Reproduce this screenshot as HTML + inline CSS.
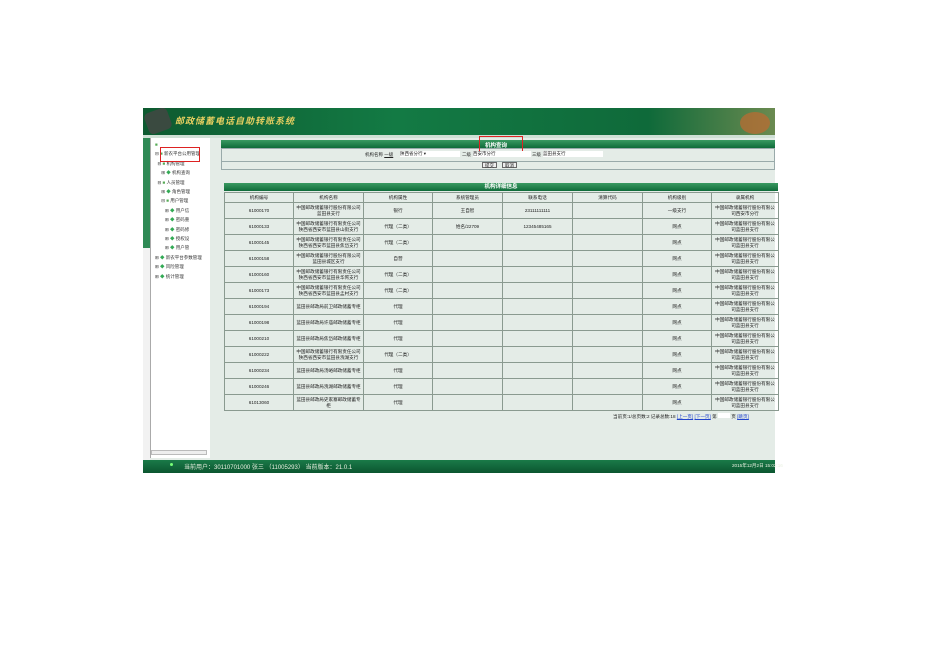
<!DOCTYPE html>
<html><head><meta charset="utf-8"><style>
*{margin:0;padding:0;box-sizing:border-box}
body{width:950px;height:671px;background:#fff;position:relative;overflow:hidden;font-family:"Liberation Sans","Noto Sans CJK SC",sans-serif;font-size:5px;color:#222}
.a{position:absolute}
table{border-collapse:collapse;table-layout:fixed}
td{border:1px solid #8a9a90;text-align:center;line-height:6px;font-size:4.6px;overflow:hidden;padding:0 1px}
.bar{background:linear-gradient(#3a9a62,#0f6b3a);height:8px;color:#fff;font-size:5.5px;font-weight:bold;text-align:center;line-height:8px}
</style></head><body>
<div class="a" style="left:143px;top:108px;width:632px;height:365px;background:#e4ece7"></div>
<!-- header -->
<div class="a" style="left:143px;top:108px;width:632px;height:27px;background:linear-gradient(90deg,#0d5a30,#137a44 40%,#0f6a3a 80%,#6a8a50)"></div>
<div class="a" style="left:146px;top:110px;width:24px;height:22px;background:#3a4a40;border-radius:5px;transform:rotate(-20deg)"></div>
<div class="a" style="left:175px;top:114px;color:#e8d060;font-size:9px;font-weight:bold;font-style:italic;letter-spacing:1px">邮政储蓄电话自助转账系统</div>
<div class="a" style="left:740px;top:112px;width:30px;height:22px;border-radius:50%;background:#c06a30;opacity:.7"></div>
<div class="a" style="left:143px;top:135px;width:632px;height:3px;background:#cfe0d5"></div>
<!-- left tabs -->
<div class="a" style="left:143px;top:138px;width:7px;height:322px;background:#f2f2f2"></div>
<div class="a" style="left:143px;top:138px;width:7px;height:110px;background:#2f8a55"></div>
<!-- tree -->
<div class="a" style="left:150px;top:138px;width:60px;height:320px;background:#fff;border-left:1px solid #aaa"></div>
<div class="a" style="left:155px;top:140px;font-size:4.5px;line-height:9.4px;color:#333;white-space:pre"><span style="color:#5a5">■</span>
⊟ <span style="color:#5a5">■</span> 新农平台公用管理
  ⊟ <span style="color:#5a5">■</span> 机构管理
     ⊞ <span style="color:#3a5">◆</span> 机构查询
  ⊟ <span style="color:#5a5">■</span> 人员管理
     ⊞ <span style="color:#3a5">◆</span> 角色管理
     ⊟ <span style="color:#5a5">■</span> 用户管理
        ⊞ <span style="color:#3a5">◆</span> 用户信
        ⊞ <span style="color:#3a5">◆</span> 密码重
        ⊞ <span style="color:#3a5">◆</span> 密码修
        ⊞ <span style="color:#3a5">◆</span> 授权设
        ⊞ <span style="color:#3a5">◆</span> 用户管
⊞ <span style="color:#3a5">◆</span> 新农平台参数管理
⊞ <span style="color:#3a5">◆</span> 风险管理
⊞ <span style="color:#3a5">◆</span> 统计管理</div>
<div class="a" style="left:160px;top:147px;width:40px;height:15px;border:1.5px solid #d22"></div>
<div class="a" style="left:151px;top:450px;width:56px;height:5px;background:#eee;border:1px solid #bbb"></div>
<!-- query panel -->
<div class="a bar" style="left:221px;top:140px;width:554px"></div>
<div class="a" style="left:221px;top:148px;width:554px;height:14px;border:1px solid #9aa"></div>
<div class="a" style="left:221px;top:161px;width:554px;height:9px;border:1px solid #9aa"></div>
<div class="a" style="left:485px;top:141px;font-size:5.5px;font-weight:bold;color:#fff">机构查询</div>
<div class="a" style="left:479px;top:136px;width:44px;height:16px;border:1.5px solid #d22"></div>
<div class="a" style="left:365px;top:152px;font-size:4.5px">机构名称 <u>一级</u></div>
<div class="a" style="left:400px;top:151px;width:60px;height:6px;background:#fff;font-size:4.5px">陕西省分行 ▾</div>
<div class="a" style="left:462px;top:152px;font-size:4.5px">二级</div>
<div class="a" style="left:473px;top:151px;width:58px;height:6px;background:#fff;font-size:4.5px">西安市分行</div>
<div class="a" style="left:532px;top:152px;font-size:4.5px">三级</div>
<div class="a" style="left:543px;top:151px;width:60px;height:6px;background:#fff;font-size:4.5px">蓝田县支行</div>
<div class="a" style="left:482px;top:162px;width:15px;height:6px;border:1px solid #666;background:#eee;font-size:4.5px;text-align:center">提交</div>
<div class="a" style="left:502px;top:162px;width:15px;height:6px;border:1px solid #666;background:#eee;font-size:4.5px;text-align:center">取消</div>
<!-- detail -->
<div class="a bar" style="left:224px;top:183px;width:554px">机构详细信息</div>
<table class="a" style="left:224px;top:192px;width:554px">
<colgroup><col style="width:69px"><col style="width:70px"><col style="width:69px"><col style="width:70px"><col style="width:70px"><col style="width:70px"><col style="width:69px"><col style="width:67px"></colgroup>
<tr style="height:10px"><td>机构编号</td><td>机构名称</td><td>机构属性</td><td>系统管理员</td><td>联系电话</td><td>清算代码</td><td>机构级别</td><td>隶属机构</td></tr>
<tr style="height:16px"><td>61000170</td><td>中国邮政储蓄银行股份有限公司蓝田县支行</td><td>银行</td><td>王自智</td><td>23111111111</td><td></td><td>一级支行</td><td>中国邮政储蓄银行股份有限公司西安市分行</td></tr>
<tr style="height:16px"><td>61000133</td><td>中国邮政储蓄银行有限责任公司陕西省西安市蓝田县山街支行</td><td>代理（二类）</td><td>姓名/22709</td><td>12345485165</td><td></td><td>网点</td><td>中国邮政储蓄银行股份有限公司蓝田县支行</td></tr>
<tr style="height:16px"><td>61000145</td><td>中国邮政储蓄银行有限责任公司陕西省西安市蓝田县焦岱支行</td><td>代理（二类）</td><td></td><td></td><td></td><td>网点</td><td>中国邮政储蓄银行股份有限公司蓝田县支行</td></tr>
<tr style="height:16px"><td>61000158</td><td>中国邮政储蓄银行股份有限公司蓝田县城区支行</td><td>自营</td><td></td><td></td><td></td><td>网点</td><td>中国邮政储蓄银行股份有限公司蓝田县支行</td></tr>
<tr style="height:16px"><td>61000160</td><td>中国邮政储蓄银行有限责任公司陕西省西安市蓝田县华胥支行</td><td>代理（二类）</td><td></td><td></td><td></td><td>网点</td><td>中国邮政储蓄银行股份有限公司蓝田县支行</td></tr>
<tr style="height:16px"><td>61000173</td><td>中国邮政储蓄银行有限责任公司陕西省西安市蓝田县孟村支行</td><td>代理（二类）</td><td></td><td></td><td></td><td>网点</td><td>中国邮政储蓄银行股份有限公司蓝田县支行</td></tr>
<tr style="height:16px"><td>61000194</td><td>蓝田县邮政局前卫邮政储蓄专柜</td><td>代理</td><td></td><td></td><td></td><td>网点</td><td>中国邮政储蓄银行股份有限公司蓝田县支行</td></tr>
<tr style="height:16px"><td>61000198</td><td>蓝田县邮政局许庙邮政储蓄专柜</td><td>代理</td><td></td><td></td><td></td><td>网点</td><td>中国邮政储蓄银行股份有限公司蓝田县支行</td></tr>
<tr style="height:16px"><td>61000210</td><td>蓝田县邮政局焦岱邮政储蓄专柜</td><td>代理</td><td></td><td></td><td></td><td>网点</td><td>中国邮政储蓄银行股份有限公司蓝田县支行</td></tr>
<tr style="height:16px"><td>61000222</td><td>中国邮政储蓄银行有限责任公司陕西省西安市蓝田县洩湖支行</td><td>代理（二类）</td><td></td><td></td><td></td><td>网点</td><td>中国邮政储蓄银行股份有限公司蓝田县支行</td></tr>
<tr style="height:16px"><td>61000234</td><td>蓝田县邮政局汤峪邮政储蓄专柜</td><td>代理</td><td></td><td></td><td></td><td>网点</td><td>中国邮政储蓄银行股份有限公司蓝田县支行</td></tr>
<tr style="height:16px"><td>61000246</td><td>蓝田县邮政局洩湖邮政储蓄专柜</td><td>代理</td><td></td><td></td><td></td><td>网点</td><td>中国邮政储蓄银行股份有限公司蓝田县支行</td></tr>
<tr style="height:16px"><td>61013060</td><td>蓝田县邮政局史家寨邮政储蓄专柜</td><td>代理</td><td></td><td></td><td></td><td>网点</td><td>中国邮政储蓄银行股份有限公司蓝田县支行</td></tr>
</table>
<div class="a" style="left:613px;top:413px;font-size:4.6px;white-space:nowrap">当前页:1/总页数:2 记录总数:18 <u style="color:#24c">[上一页]</u> <u style="color:#24c">[下一页]</u> 第 <span style="display:inline-block;width:12px;height:5px;background:#fff"></span> 页 <u style="color:#24c">[跳页]</u></div>
<!-- footer -->
<div class="a" style="left:143px;top:460px;width:632px;height:13px;background:linear-gradient(#1a7a48,#0b5530)"></div>
<div class="a" style="left:170px;top:463px;width:3px;height:3px;border-radius:50%;background:#7f7"></div>
<div class="a" style="left:184px;top:462px;color:#e8f0e0;font-size:6px;white-space:nowrap">当前用户：30110701000 张三 （11005293） 当前版本：21.0.1</div>
<div class="a" style="left:732px;top:463px;color:#e8f0e0;font-size:4.6px;white-space:nowrap">2015年12月2日 15:02:16</div>
</body></html>
